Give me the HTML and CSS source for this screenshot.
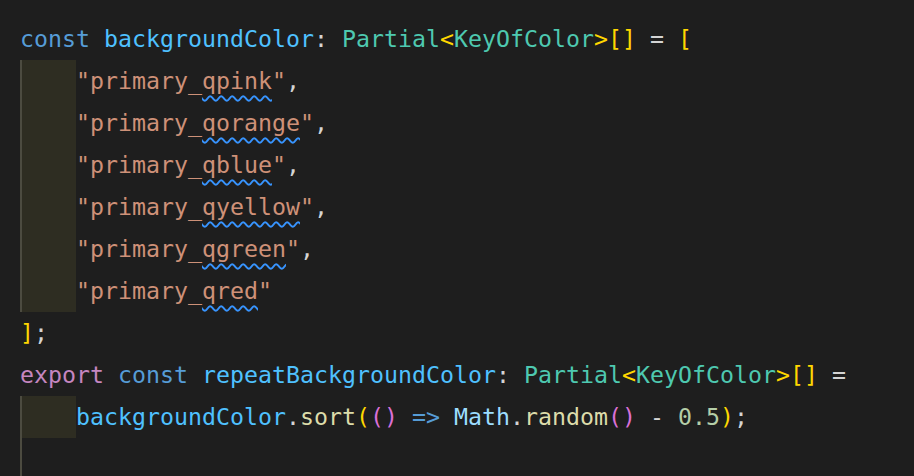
FILE: index.html
```html
<!DOCTYPE html>
<html>
<head>
<meta charset="utf-8">
<link rel="stylesheet" href="styles.css">
</head>
<body>
<div class="editor">
  <div class="line"><span class="kw">const</span> <span class="cv">backgroundColor</span><span class="p">:</span> <span class="ty">Partial</span><span class="b1">&lt;</span><span class="ty">KeyOfColor</span><span class="b1">&gt;[]</span> <span class="p">=</span> <span class="b1">[</span></div>
  <div class="line"><span class="indent"></span><span class="str">"primary_<span class="sq">qpink</span>"</span><span class="p">,</span></div>
  <div class="line"><span class="indent"></span><span class="str">"primary_<span class="sq">qorange</span>"</span><span class="p">,</span></div>
  <div class="line"><span class="indent"></span><span class="str">"primary_<span class="sq">qblue</span>"</span><span class="p">,</span></div>
  <div class="line"><span class="indent"></span><span class="str">"primary_<span class="sq">qyellow</span>"</span><span class="p">,</span></div>
  <div class="line"><span class="indent"></span><span class="str">"primary_<span class="sq">qgreen</span>"</span><span class="p">,</span></div>
  <div class="line"><span class="indent"></span><span class="str">"primary_<span class="sq">qred</span>"</span></div>
  <div class="line"><span class="b1">]</span><span class="p">;</span></div>
  <div class="line"><span class="ex">export</span> <span class="kw">const</span> <span class="cv">repeatBackgroundColor</span><span class="p">:</span> <span class="ty">Partial</span><span class="b1">&lt;</span><span class="ty">KeyOfColor</span><span class="b1">&gt;[]</span> <span class="p">=</span></div>
  <div class="line"><span class="indent"></span><span class="cv">backgroundColor</span><span class="p">.</span><span class="fn">sort</span><span class="b1">(</span><span class="b2">()</span> <span class="kw">=&gt;</span> <span class="obj">Math</span><span class="p">.</span><span class="fn">random</span><span class="b2">()</span> <span class="p">-</span> <span class="num">0.5</span><span class="b1">)</span><span class="p">;</span></div>
  <div class="line"><span class="guide"></span></div>
</div>
</body>
</html>
```
FILE: styles.css
```css
html, body {
  margin: 0;
  padding: 0;
  background: #1e1e1e;
}
.editor {
  width: 914px;
  height: 476px;
  overflow: hidden;
  box-sizing: border-box;
  padding: 18px 0 0 20px;
  font-family: "DejaVu Sans Mono", monospace;
  font-size: 23.25px;
  color: #d4d4d4;
}
.line {
  height: 42px;
  line-height: 42px;
  white-space: pre;
}
.indent {
  display: inline-block;
  vertical-align: top;
  width: 56px;
  height: 42px;
  background: #2e2d22;
  border-left: 2px solid #4c4b40;
  box-sizing: border-box;
}
.guide {
  display: inline-block;
  vertical-align: top;
  width: 2px;
  height: 42px;
  background: #4c4b40;
}
.kw { color: #569cd6; }
.ex { color: #c586c0; }
.cv { color: #4fc1ff; }
.ty { color: #4ec9b0; }
.b1 { color: #ffd700; }
.b2 { color: #da70d6; }
.p { color: #d4d4d4; }
.str { color: #ce9178; }
.fn { color: #dcdcaa; }
.obj { color: #9cdcfe; }
.num { color: #b5cea8; }
.sq {
  text-decoration: underline wavy #3794ff;
  text-decoration-thickness: 1.5px;
  text-underline-offset: 6px;
}
```
